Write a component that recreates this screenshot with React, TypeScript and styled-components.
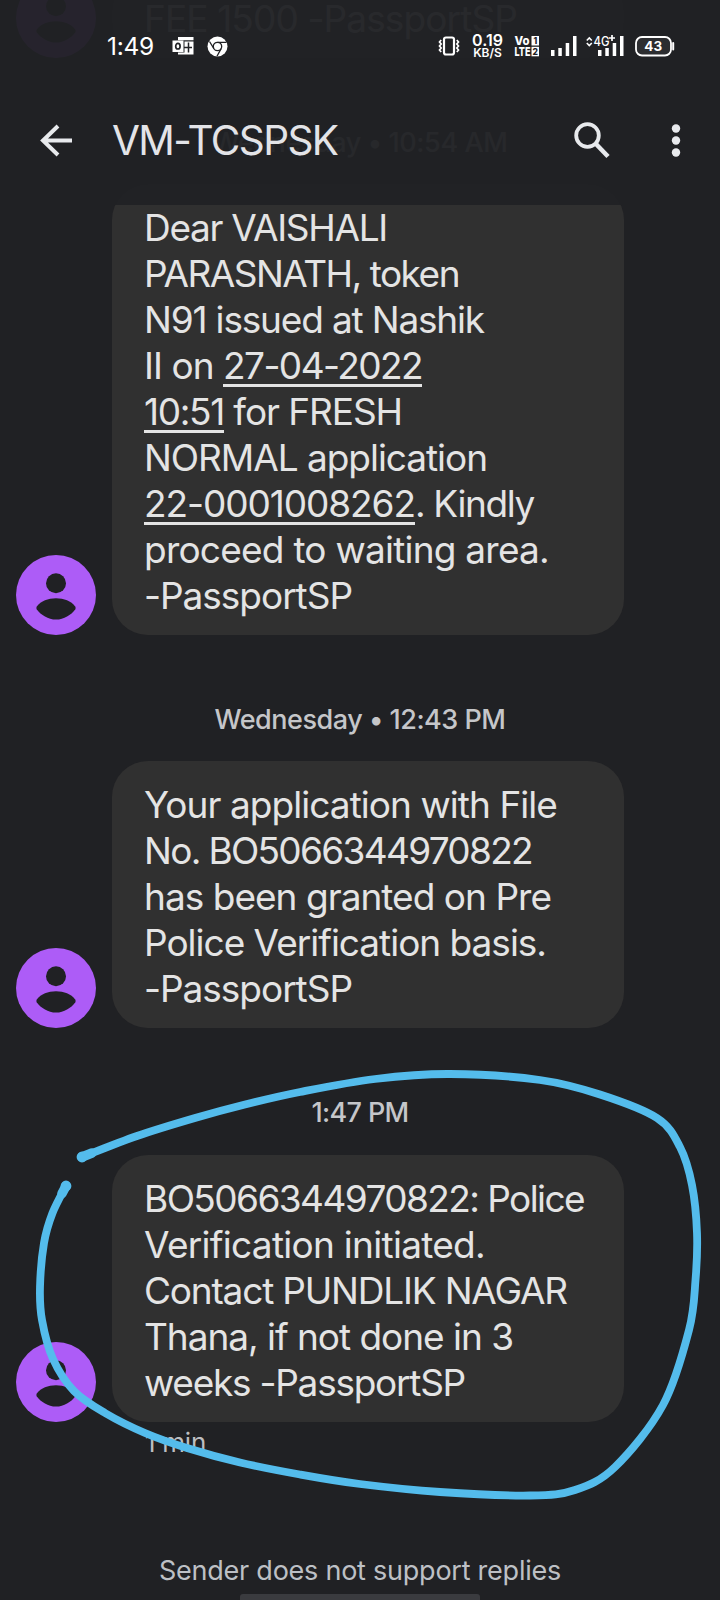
import React, { useLayoutEffect, useRef, useState } from "react";
import styled, { createGlobalStyle } from "styled-components";

const GlobalStyle = createGlobalStyle`
  * { box-sizing: border-box; }
  html, body { margin: 0; padding: 0; background: #202124; }
  body { font-family: Inter, Roboto, sans-serif; }
`;

const Screen = styled.main`
  position: relative;
  width: 720px;
  height: 1600px;
  overflow: hidden;
  background: #202124;
  color: #e4e4e4;
`;

const Conversation = styled.section`
  height: 1600px;
  display: flex;
  flex-direction: column;
  justify-content: flex-end;
`;

const MessageRow = styled.article`
  flex: none;
  display: flex;
  align-items: flex-end;
  gap: 16px;
  padding-left: 16px;
`;

const AvatarIcon = styled.svg`
  flex: none;
  width: 80px;
  height: 80px;
`;

const Bubble = styled.div`
  width: 512px;
  padding: 21px 32px 16px;
  border-radius: 36px;
  background: #303030;
  font-size: 37px;
  line-height: 46px;
`;

const Line = styled.div`
  height: 46px;
  white-space: nowrap;
`;

const Run = styled.span<{ $link?: boolean }>`
  display: inline-block;
  vertical-align: top;
  white-space: pre;
  text-decoration: ${(p) => (p.$link ? "underline" : "none")};
  text-decoration-thickness: 3px;
  text-underline-offset: 5px;
  text-decoration-skip-ink: none;
`;

const DateRow = styled.div`
  flex: none;
  height: 126.3px;
  padding-top: 69px;
  display: flex;
  justify-content: center;
  color: #c5c6c9;
  font-size: 27px;
  font-weight: 500;
  line-height: 32px;
`;

const SentAgo = styled.div`
  flex: none;
  height: 128.3px;
  padding: 5px 0 0 145px;
  color: #bdbec1;
  font-size: 26px;
  line-height: 32px;
`;

const ReplyNotice = styled.footer`
  flex: none;
  height: 50px;
  display: flex;
  flex-direction: column;
  align-items: center;
  justify-content: space-between;
  color: #bdc0c5;
  font-size: 27px;
  line-height: 42px;
`;

const HomeBar = styled.div`
  width: 240px;
  height: 6px;
  border-radius: 3px 3px 0 0;
  background: #3a3b3f;
`;

const TopOverlay = styled.header`
  position: absolute;
  inset: 0 0 auto;
  height: 205px;
  background: rgba(32, 33, 36, 0.96);
`;

const StatusBar = styled.div`
  height: 92px;
  padding: 30px 45px 0 107px;
  display: flex;
  align-items: flex-start;
  justify-content: space-between;
  color: #fff;
`;

const StatusGroup = styled.div`
  display: flex;
  align-items: center;
  height: 32px;
`;

const Clock = styled.time`
  height: 32px;
  font-size: 24.5px;
  line-height: 32px;
  margin-right: 18px;
`;

const StatusIcon = styled.svg<{ $gap: number }>`
  display: block;
  flex: none;
  overflow: visible;
  margin-right: ${(p) => p.$gap}px;
`;

const Speed = styled.div`
  width: 31px;
  margin-right: 11px;
  display: flex;
  flex-direction: column;
  align-items: center;
  font-weight: 600;
  font-size: 16px;
  line-height: 14px;
`;

const SpeedUnit = styled.span`
  font-size: 12px;
  line-height: 12px;
`;

const AppBar = styled.nav`
  height: 96px;
  padding: 0 39px 0 37px;
  display: flex;
  align-items: center;
`;

const Title = styled.h1`
  flex: 1;
  height: 48px;
  margin: 2px 0 0 37px;
  font-size: 40.5px;
  font-weight: 400;
  line-height: 48px;
  color: #e3e4e8;
`;

const BarIcon = styled.svg<{ $right?: number }>`
  display: block;
  flex: none;
  margin-right: ${(p) => p.$right ?? 0}px;
`;

const Scribble = styled.svg`
  position: absolute;
  left: 0;
  top: 0;
  pointer-events: none;
`;

/* Spreads the letters of a run so that it takes the given advance width. */
function Fit({ text, width, link }: { text: string; width: number; link?: boolean }) {
  const ref = useRef<HTMLSpanElement>(null);
  const [spacing, setSpacing] = useState(0);
  useLayoutEffect(() => {
    if (ref.current) {
      const natural = ref.current.getBoundingClientRect().width;
      setSpacing((s) => s + (width - natural) / text.length);
    }
  }, [text, width]);
  return (
    <Run ref={ref} $link={link} style={{ letterSpacing: spacing }}>
      {text}
    </Run>
  );
}

type Piece = [text: string, width: number, link?: boolean];

function Avatar() {
  return (
    <AvatarIcon viewBox="0 0 80 80">
      <circle cx="40" cy="40" r="40" fill="#ad5cf7" />
      <circle cx="40" cy="28.3" r="10" fill="#202124" />
      <path d="M20.800 51.500C25 46 32 43.300 40 43.300S55 46 59.200 51.500Q60.200 53 59.200 54.500C55 60 48 64.600 40 64.600S25 60 20.800 54.500Q19.800 53 20.800 51.500Z" fill="#202124" />
    </AvatarIcon>
  );
}

function Message({ lines }: { lines: Piece[][] }) {
  return (
    <MessageRow>
      <Avatar />
      <Bubble>
        {lines.map((pieces, i) => (
          <Line key={i}>
            {pieces.map(([text, width, link]) => (
              <Fit key={text} text={text} width={width} link={link} />
            ))}
          </Line>
        ))}
      </Bubble>
    </MessageRow>
  );
}

const feeMessage: Piece[][] = [[["FEE 1500 -PassportSP", 373]]];

const tokenMessage: Piece[][] = [
  [["Dear VAISHALI", 243]],
  [["PARASNATH, token", 315]],
  [["N91 issued at Nashik", 340]],
  [["II on ", 79], ["27-04-2022", 199, true]],
  [["10:51", 80, true], [" for FRESH", 178]],
  [["NORMAL application", 343]],
  [["22-0001008262", 271, true], [". Kindly", 119]],
  [["proceed to waiting area.", 405]],
  [["-PassportSP", 208]],
];

const grantedMessage: Piece[][] = [
  [["Your application with File", 413]],
  [["No. BO5066344970822", 388]],
  [["has been granted on Pre", 407]],
  [["Police Verification basis.", 402]],
  [["-PassportSP", 208]],
];

const initiatedMessage: Piece[][] = [
  [["BO5066344970822: Police", 440]],
  [["Verification initiated.", 341]],
  [["Contact PUNDLIK NAGAR", 423]],
  [["Thana, if not done in 3", 369]],
  [["weeks -PassportSP", 321]],
];

/* Points that the blue marker passes through, from the upper left end clockwise. */
const markerPoints: [number, number][] = [
  [82, 1157], [137, 1136], [195, 1118], [245, 1104.500], [300, 1092], [375, 1079],
  [450, 1074], [540, 1080], [600, 1094.500], [657, 1118],
  [680, 1147], [692, 1185], [697, 1233], [695.500, 1280], [689, 1330],
  [663, 1405], [615, 1467], [575, 1490], [530, 1495.500],
  [440, 1492], [360, 1484], [300, 1474.500], [240, 1462.500], [187, 1448],
  [145, 1433], [105, 1413], [74, 1391], [53, 1359], [42, 1320], [40, 1287],
  [44, 1243], [52.500, 1213], [66, 1186],
];

/* Joins the points by cubic segments with a continuous tangent. */
function smoothPath(points: [number, number][]) {
  let d = `M${points[0][0]} ${points[0][1]}`;
  for (let i = 0; i < points.length - 1; i++) {
    const a = points[Math.max(i - 1, 0)];
    const b = points[i];
    const c = points[i + 1];
    const e = points[Math.min(i + 2, points.length - 1)];
    d += `C${b[0] + (c[0] - a[0]) / 6} ${b[1] + (c[1] - a[1]) / 6} ${c[0] - (e[0] - b[0]) / 6} ${c[1] - (e[1] - b[1]) / 6} ${c[0]} ${c[1]}`;
  }
  return d;
}

function StatusIcons() {
  return (
    <>
      <StatusIcon $gap={12} width="22" height="20" viewBox="0 0 22 20">
        <rect x="6" y="1.500" width="10" height="17" rx="2" fill="none" stroke="#fff" strokeWidth="2.200" />
        <path d="M3.200 4L1.500 6 3.200 8 1.500 10 3.200 12 1.500 14 3.200 16M18.800 4L20.500 6 18.800 8 20.500 10 18.800 12 20.500 14 18.800 16" fill="none" stroke="#fff" strokeWidth="1.700" />
      </StatusIcon>
      <Speed>
        0.19
        <SpeedUnit>KB/S</SpeedUnit>
      </Speed>
      <StatusIcon $gap={11} width="26" height="22" viewBox="0 0 26 22" fill="#fff" fontWeight="800">
        <text x="0.500" y="10" fontSize="12" textLength="15" lengthAdjust="spacingAndGlyphs">Vo</text>
        <text x="0.500" y="21" fontSize="12" textLength="16" lengthAdjust="spacingAndGlyphs">LTE</text>
        <rect x="17.500" y="1" width="7.500" height="9.500" />
        <rect x="17.500" y="11.800" width="7.500" height="9.500" />
        <text x="19.500" y="9" fontSize="8.500" fill="#202124">1</text>
        <text x="18.500" y="19.600" fontSize="8.500" fill="#202124">2</text>
      </StatusIcon>
      <StatusIcon $gap={9} width="26" height="22" viewBox="0 0 26 22" fill="#fff">
        <rect x="0" y="15" width="3.500" height="6" />
        <rect x="7.300" y="13" width="3.500" height="8" />
        <rect x="14.700" y="8" width="3.500" height="13" />
        <rect x="22" y="1" width="3.500" height="20" />
      </StatusIcon>
      <StatusIcon $gap={11} width="38" height="22" viewBox="0 0 38 22" fill="#fff">
        <path d="M0.800 5.500L3.300 3 5.800 5.500M0.800 8L3.300 10.500 5.800 8" fill="none" stroke="#fff" strokeWidth="1.600" />
        <text x="7.500" y="11" fontSize="13" fontWeight="500" textLength="16" lengthAdjust="spacingAndGlyphs">4G</text>
        <path d="M26 0V6M23 3H29" stroke="#fff" strokeWidth="1.700" />
        <rect x="12" y="15" width="3.500" height="6" />
        <rect x="19.300" y="13" width="3.500" height="8" />
        <rect x="26.700" y="8" width="3.500" height="13" />
        <rect x="34" y="1" width="3.500" height="20" />
      </StatusIcon>
      <StatusIcon $gap={0} width="40" height="22" viewBox="0 0 40 22">
        <rect x="1" y="2" width="35" height="18.500" rx="6" fill="#2c2d30" stroke="#fff" strokeWidth="1.800" />
        <path d="M38.200 8V14.500" stroke="#fff" strokeWidth="2" strokeLinecap="round" />
        <text x="18.300" y="16" fontSize="13.500" fontWeight="700" fill="#fff" textAnchor="middle">43</text>
      </StatusIcon>
    </>
  );
}

export default function App() {
  return (
    <Screen>
      <GlobalStyle />
      <Conversation>
        <Message lines={feeMessage} />
        <DateRow><Fit text="Wednesday • 10:54 AM" width={295} /></DateRow>
        <Message lines={tokenMessage} />
        <DateRow><Fit text="Wednesday • 12:43 PM" width={291} /></DateRow>
        <Message lines={grantedMessage} />
        <DateRow><Fit text="1:47 PM" width={97} /></DateRow>
        <Message lines={initiatedMessage} />
        <SentAgo><Fit text="1 min" width={61} /></SentAgo>
        <ReplyNotice>
          <Fit text="Sender does not support replies" width={402} />
          <HomeBar />
        </ReplyNotice>
      </Conversation>

      <TopOverlay>
        <StatusBar>
          <StatusGroup>
            <Clock><Fit text="1:49" width={47} /></Clock>
            <StatusIcon $gap={13} width="22" height="20" viewBox="0 0 22 20">
              <path d="M6 1H21.500V4.200H6ZM12.500 5.500H21.500V18.500H6V16.500H12.500Z" fill="#fff" />
              <rect x="0.500" y="4.500" width="11" height="11.500" fill="#fff" />
              <ellipse cx="5.900" cy="10.200" rx="2.200" ry="2.800" fill="none" stroke="#202124" strokeWidth="1.700" />
              <path d="M16.500 6.500V16.500M12 11.500H20" stroke="#202124" strokeWidth="1.500" />
            </StatusIcon>
            <StatusIcon $gap={0} width="21" height="21" viewBox="0 0 21 21">
              <circle cx="10.500" cy="10.500" r="10" fill="#fff" />
              <circle cx="10.500" cy="10.500" r="4.200" fill="none" stroke="#202124" strokeWidth="1.300" />
              <path d="M10.500 6.300H19.500M6.900 12.600L2.500 5.500M14.100 12.600L10 20.300" stroke="#202124" strokeWidth="1.300" />
            </StatusIcon>
          </StatusGroup>
          <StatusGroup>
            <StatusIcons />
          </StatusGroup>
        </StatusBar>
        <AppBar>
          <BarIcon width="38" height="38" viewBox="0 0 38 38">
            <path d="M35 19.500H6M21 5L6 19.500 21 34" fill="none" stroke="#e8eaed" strokeWidth="4" />
          </BarIcon>
          <Title><Fit text="VM-TCSPSK" width={225.5} /></Title>
          <BarIcon $right={60} width="38" height="38" viewBox="0 0 38 38">
            <circle cx="14.500" cy="14.500" r="11.300" fill="none" stroke="#e8eaed" strokeWidth="3.800" />
            <path d="M23 23L35 35.500" stroke="#e8eaed" strokeWidth="4.500" />
          </BarIcon>
          <BarIcon width="10" height="38" viewBox="0 0 10 38" fill="#e8eaed">
            <circle cx="5" cy="7.500" r="4.200" />
            <circle cx="5" cy="19.500" r="4.200" />
            <circle cx="5" cy="31.500" r="4.200" />
          </BarIcon>
        </AppBar>
      </TopOverlay>

      <Scribble width="720" height="1600" viewBox="0 0 720 1600" fill="none" stroke="#54bcec" strokeWidth="7.800" strokeLinecap="round" strokeLinejoin="round">
        <path d={smoothPath(markerPoints)} />
        <path d="M82 1157L92 1153M66 1186L62 1193.500" strokeWidth="9.500" />
        <circle cx="82" cy="1157" r="1.500" />
        <circle cx="66" cy="1186" r="1.500" />
      </Scribble>
    </Screen>
  );
}
